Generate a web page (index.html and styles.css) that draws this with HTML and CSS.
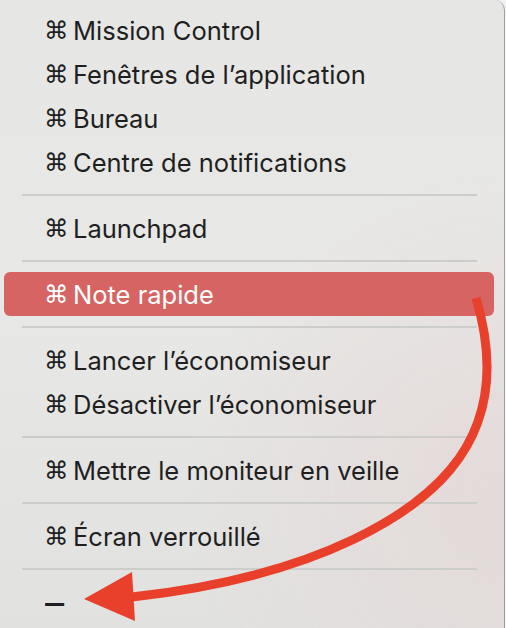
FILE: index.html
```html
<!DOCTYPE html>
<html lang="fr">
<head>
<meta charset="utf-8">
<title>Menu</title>
<link rel="stylesheet" href="styles.css">
</head>
<body>
<div class="menu">
  <div class="item"><span class="cmd">⌘</span>Mission Control</div>
  <div class="item"><span class="cmd">⌘</span>Fenêtres de l’application</div>
  <div class="item"><span class="cmd">⌘</span>Bureau</div>
  <div class="item"><span class="cmd">⌘</span>Centre de notifications</div>
  <div class="sep"></div>
  <div class="item"><span class="cmd">⌘</span>Launchpad</div>
  <div class="sep"></div>
  <div class="item active"><span class="cmd">⌘</span>Note rapide</div>
  <div class="sep"></div>
  <div class="item"><span class="cmd">⌘</span>Lancer l’économiseur</div>
  <div class="item"><span class="cmd">⌘</span>Désactiver l’économiseur</div>
  <div class="sep"></div>
  <div class="item"><span class="cmd">⌘</span>Mettre le moniteur en veille</div>
  <div class="sep"></div>
  <div class="item"><span class="cmd">⌘</span>Écran verrouillé</div>
  <div class="sep"></div>
  <div class="item"><span class="dash">–</span></div>
</div>
<svg class="arrow" width="506" height="628" viewBox="0 0 506 628" xmlns="http://www.w3.org/2000/svg">
  <path d="M476 298 C500 378 482 432 450 470 C418 508 330 575 132 597" fill="none" stroke="#e8402a" stroke-width="9"/>
  <polygon points="84,599 132,572 135,621" fill="#e8402a"/>
</svg>
</body>
</html>
```
FILE: styles.css
```css
html, body {
  margin: 0;
  padding: 0;
  background: #f2f2f2;
}
.menu {
  width: 505px;
  height: 628px;
  box-sizing: border-box;
  padding: 8px 10px 0 4px;
  border-right: 1px solid rgba(0,0,0,0.3);
  border-top-right-radius: 10px;
  background:
    radial-gradient(circle at 100% 78%, rgba(228,214,214,0.7), rgba(228,214,214,0) 45%),
    linear-gradient(180deg, #e6e6e4 0%, #e8e8e6 45%, #e1e1df 100%);
  font-family: "Inter", "DejaVu Sans", sans-serif;
  font-size: 25.5px;
  color: #1f1f1f;
  overflow: hidden;
}
.item {
  display: flex;
  align-items: center;
  height: 44px;
  padding-left: 40px;
  padding-top: 1px;
  box-sizing: border-box;
  border-radius: 6px;
  white-space: nowrap;
}
.item.active {
  background: #d66462;
  color: #ffffff;
}
.cmd {
  font-family: "DejaVu Sans", sans-serif;
  font-size: 24.5px;
  width: 29px;
  flex: none;
}
.dash {
  display: inline-block;
  font-weight: 700;
  transform: scaleX(1.5);
  transform-origin: left center;
  margin-left: 1px;
}
.sep {
  height: 2px;
  margin: 10px 17px 10px 18px;
  background: #cdcdcb;
}
.arrow {
  position: absolute;
  top: 0;
  left: 0;
  pointer-events: none;
}
```
